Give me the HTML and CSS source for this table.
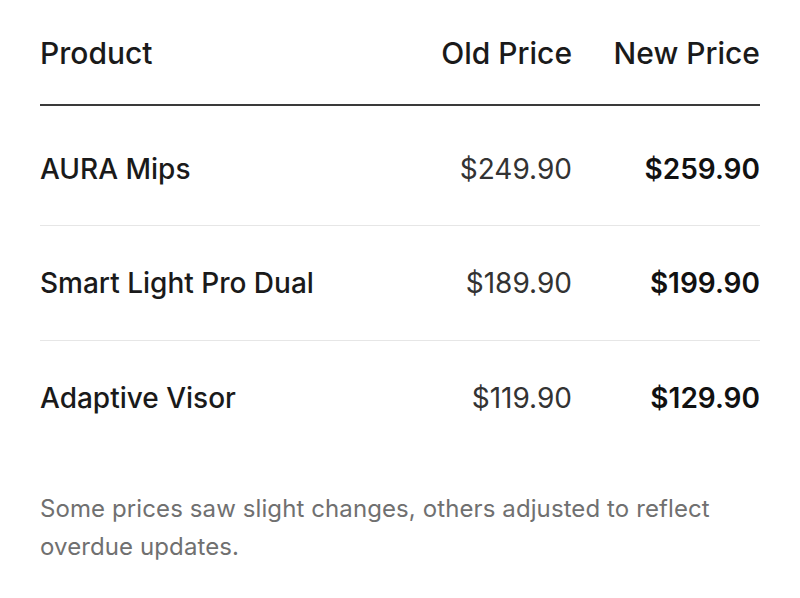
FILE: index.html
```html
<!DOCTYPE html>
<html lang="en">
<head>
<meta charset="utf-8">
<title>Price changes</title>
<link rel="stylesheet" href="styles.css">
</head>
<body>
<main class="wrap">
  <div class="table">
    <div class="row head">
      <div class="cell">Product</div>
      <div class="cell num">Old Price</div>
      <div class="cell num">New Price</div>
    </div>
    <div class="row item first">
      <div class="cell">AURA Mips</div>
      <div class="cell num old">$249.90</div>
      <div class="cell num new">$259.90</div>
    </div>
    <div class="row item">
      <div class="cell">Smart Light Pro Dual</div>
      <div class="cell num old">$189.90</div>
      <div class="cell num new">$199.90</div>
    </div>
    <div class="row item last">
      <div class="cell">Adaptive Visor</div>
      <div class="cell num old">$119.90</div>
      <div class="cell num new">$129.90</div>
    </div>
  </div>
  <p class="note">Some prices saw slight changes, others adjusted to reflect overdue updates.</p>
</main>
</body>
</html>
```

FILE: styles.css
```css
html, body {
  margin: 0;
  padding: 0;
  background: #ffffff;
}
body {
  font-family: Inter, "Liberation Sans", Arial, sans-serif;
  color: #1a1a1a;
}
.wrap {
  padding: 0 40px;
}
.row {
  display: grid;
  grid-template-columns: 1fr 140px 150px;
  column-gap: 38px;
  align-items: center;
}
.cell {
  white-space: nowrap;
}
.num {
  text-align: right;
}
.head {
  font-size: 30px;
  line-height: 39px;
  font-weight: 500;
  padding: 34px 0 31px;
  border-bottom: 2px solid #3a3a3a;
}
.item {
  font-size: 28px;
  line-height: 38px;
  font-weight: 500;
  padding: 38px 0;
  border-bottom: 1px solid #e6e6e6;
}
.item.first {
  padding-top: 44px;
  padding-bottom: 37px;
}
.item.last {
  border-bottom: none;
}
.old {
  color: #333333;
  font-weight: 400;
}
.new {
  font-weight: 600;
  color: #111111;
}
.note {
  margin: 35px 0 0;
  font-size: 24px;
  line-height: 38px;
  color: #707070;
  letter-spacing: 0.1px;
}
```
